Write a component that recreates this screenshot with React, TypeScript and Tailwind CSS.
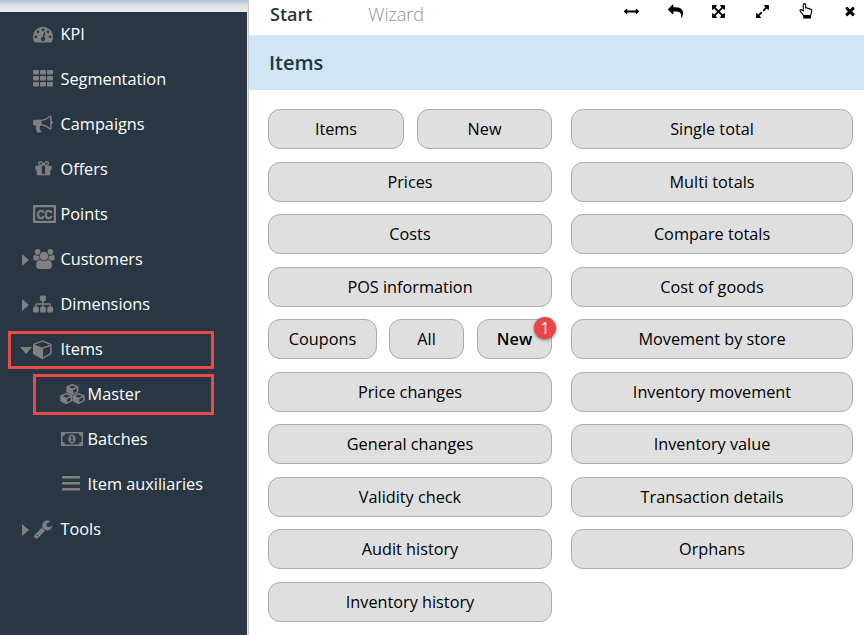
import React from "react";

const P: Record<string, string> = {
  kpi: "M384 1152q0-53-37.5-90.5t-90.5-37.5-90.5 37.5-37.5 90.5 37.5 90.5 90.5 37.5 90.5-37.5 37.5-90.5zm192-448q0-53-37.5-90.5t-90.5-37.5-90.5 37.5-37.5 90.5 37.5 90.5 90.5 37.5 90.5-37.5 37.5-90.5zm428 481l101-382q6-26-7.5-48.5t-38.5-29.5-48 6.5-30 39.5l-101 382q-60 5-107 43.5t-63 98.5q-20 77 20 146t117 89 146-20 89-117q16-60-6-117t-72-91zm660-33q0-53-37.5-90.5t-90.5-37.5-90.5 37.5-37.5 90.5 37.5 90.5 90.5 37.5 90.5-37.5 37.5-90.5zm-640-640q0-53-37.5-90.5t-90.5-37.5-90.5 37.5-37.5 90.5 37.5 90.5 90.5 37.5 90.5-37.5 37.5-90.5zm448 192q0-53-37.5-90.5t-90.5-37.5-90.5 37.5-37.5 90.5 37.5 90.5 90.5 37.5 90.5-37.5 37.5-90.5zm320 448q0 261-141 483-19 29-54 29h-1402q-35 0-54-29-141-221-141-483 0-182 71-348t191-286 286-191 348-71 348 71 286 191 191 286 71 348z",
  bullhorn: "M1664 640q53 0 90.5 37.5t37.5 90.5-37.5 90.5-90.5 37.5v384q0 52-38 90t-90 38q-417-347-812-380-58 19-91 66t-31 100.5 40 92.5q-20 33-23 65.5t6 58 33.5 55 48 50 61.5 50.5q-29 58-111.5 83t-168.5 11.5-132-55.5q-7-23-29.5-87.5t-32-94.5-23-89-15-101 3.5-98.5 22-110.5h-122q-66 0-113-47t-47-113v-192q0-66 47-113t113-47h480q435 0 896-384 52 0 90 38t38 90v384zm-128 604v-954q-394 302-768 343v270q377 42 768 341z",
  gift: "M1056 1356v-716h-320v716q0 25 18 38.5t46 13.5h192q28 0 46-13.5t18-38.5zm-456-844h195l-126-161q-26-31-69-31-40 0-68 28t-28 68 28 68 68 28zm688-96q0-40-28-68t-68-28q-43 0-69 31l-125 161h194q40 0 68-28t28-68zm376 256v320q0 14-9 23t-23 9h-96v416q0 40-28 68t-68 28h-1088q-40 0-68-28t-28-68v-416h-96q-14 0-23-9t-9-23v-320q0-14 9-23t23-9h440q-93 0-158.5-65.5t-65.5-158.5 65.5-158.5 158.5-65.5q107 0 168 77l128 165 128-165q61-77 168-77 93 0 158.5 65.5t65.5 158.5-65.5 158.5-158.5 65.5h440q14 0 23 9t9 23z",
  users: "M593 896q-162 5-265 128h-134q-82 0-138-40.5t-56-118.5q0-353 124-353 6 0 43.5 21t97.5 42.5 119 21.5q67 0 133-23-5 37-5 66 0 139 81 256zm1071 637q0 120-73 189.5t-194 69.5h-874q-121 0-194-69.5t-73-189.5q0-53 3.5-103.5t14-109 26.5-108.5 43-97.5 62-81 85.5-53.5 111.5-20q10 0 43 21.5t73 48 107 48 135 21.5 135-21.5 107-48 73-48 43-21.5q61 0 111.5 20t85.5 53.5 62 81 43 97.5 26.5 108.5 14 109 3.5 103.5zm-1024-1277q0 106-75 181t-181 75-181-75-75-181 75-181 181-75 181 75 75 181zm704 384q0 159-112.5 271.5t-271.5 112.5-271.5-112.5-112.5-271.5 112.5-271.5 271.5-112.5 271.5 112.5 112.5 271.5zm576 225q0 78-56 118.5t-138 40.5h-134q-103-123-265-128 81-117 81-256 0-29-5-66 66 23 133 23 59 0 119-21.5t97.5-42.5 43.5-21q124 0 124 353zm-128-609q0 106-75 181t-181 75-181-75-75-181 75-181 181-75 181 75 75 181z",
  sitemap: "M1792 1248v320q0 40-28 68t-68 28h-320q-40 0-68-28t-28-68v-320q0-40 28-68t68-28h96v-192h-512v192h96q40 0 68 28t28 68v320q0 40-28 68t-68 28h-320q-40 0-68-28t-28-68v-320q0-40 28-68t68-28h96v-192h-512v192h96q40 0 68 28t28 68v320q0 40-28 68t-68 28h-320q-40 0-68-28t-28-68v-320q0-40 28-68t68-28h96v-192q0-52 38-90t90-38h512v-192h-96q-40 0-68-28t-28-68v-320q0-40 28-68t68-28h320q40 0 68 28t28 68v320q0 40-28 68t-68 28h-96v192h512q52 0 90 38t38 90v192h96q40 0 68 28t28 68z",
  cube: "M896 1629l640-349v-636l-640 233v752zm-64-865l698-254-698-254-698 254 698 254zm832-252v768q0 35-18 65t-49 47l-704 384q-28 16-61 16t-61-16l-704-384q-31-17-49-47t-18-65v-768q0-40 23-73t61-47l704-256q22-8 44-8t44 8l704 256q38 14 61 47t23 73z",
  wrench: "M448 1472q0-26-19-45t-45-19-45 19-19 45 19 45 45 19 45-19 19-45zm644-420l-682 682q-37 37-90 37-52 0-91-37l-106-108q-38-36-38-90 0-53 38-91l681-681q39 98 114.5 173.5t173.5 114.5zm634-435q0 39-23 106-47 134-164.5 217.5t-258.5 83.5q-185 0-316.5-131.5t-131.5-316.5 131.5-316.5 316.5-131.5q58 0 121.5 16.5t107.5 46.5q16 11 16 28t-16 28l-293 169v224l193 107q5-3 79-48.5t135.5-81 70.5-35.5q15 0 23.5 10t8.5 25z",
  arrowsH: "M1792 896q0 26-19 45l-256 256q-19 19-45 19t-45-19-19-45v-128h-1024v128q0 26-19 45t-45 19-45-19l-256-256q-19-19-19-45t19-45l256-256q19-19 45-19t45 19 19 45v128h1024v-128q0-26 19-45t45-19 45 19l256 256q19 19 19 45z",
  reply: "M1792 1120q0 166-127 451-3 7-10.5 24t-13.5 30-13 22q-12 17-28 17-15 0-23.5-10t-8.5-25q0-9 2.5-26.5t2.5-23.5q5-68 5-123 0-101-17.5-181t-48.5-138.5-80-101-105.5-69.5-133-42.5-154-21.5-175.5-6h-224v256q0 26-19 45t-45 19-45-19l-512-512q-19-19-19-45t19-45l512-512q19-19 45-19t45 19 19 45v256h224q713 0 875 403 53 134 53 333z",
  arrowsAlt: "M1411 541l-355 355 355 355 144-144q29-31 70-14 39 17 39 59v448q0 26-19 45t-45 19h-448q-42 0-59-40-17-39 14-69l144-144-355-355-355 355 144 144q31 30 14 69-17 40-59 40h-448q-26 0-45-19t-19-45v-448q0-42 40-59 39-17 69 14l144 144 355-355-355-355-144 144q-19 19-45 19-12 0-24-5-40-17-40-59v-448q0-26 19-45t45-19h448q42 0 59 40 17 39-14 69l-144 144 355 355 355-355-144-144q-31-30-14-69 17-40 59-40h448q26 0 45 19t19 45v448q0 42-39 59-13 5-25 5-26 0-45-19z",
  expand: "M883 1056q0 13-10 23l-332 332 144 144q19 19 19 45t-19 45-45 19h-448q-26 0-45-19t-19-45v-448q0-26 19-45t45-19 45 19l144 144 332-332q10-10 23-10t23 10l114 114q10 10 10 23zm781-864v448q0 26-19 45t-45 19-45-19l-144-144-332 332q-10 10-23 10t-23-10l-114-114q-10-10-10-23t10-23l332-332-144-144q-19-19-19-45t19-45 45-19h448q26 0 45 19t19 45z",
  times: "M1490 1322q0 40-28 68l-136 136q-28 28-68 28t-68-28l-294-294-294 294q-28 28-68 28t-68-28l-136-136q-28-28-28-68t28-68l294-294-294-294q-28-28-28-68t28-68l136-136q28-28 68-28t68 28l294 294 294-294q28-28 68-28t68 28l136 136q28 28 28 68t-28 68l-294 294 294 294q28 28 28 68z",
};

function Glyph({ d, w = 1792, className }: { d: string; w?: number; className: string }) {
  return (
    <svg viewBox={`0 0 ${w} 1792`} fill="currentColor" className={className}>
      <path d={d} />
    </svg>
  );
}

const Grid = () => (
  <svg viewBox="0 0 20 17" fill="currentColor" className="h-[17px] w-5">
    {[0, 6, 12].map((y) => [0, 7, 14].map((x) => <rect key={`${x}-${y}`} x={x} y={y} width="6" height="4.5" rx="1" />))}
  </svg>
);

const Captions = () => (
  <svg viewBox="0 0 23 18" className="h-[18px] w-[23px]" fill="currentColor">
    <path fillRule="evenodd" d="M0 0h23v18H0zM2.200 3.200v11.600q0 1 1 1h16.600q1 0 1-1V3.200q0-1-1-1H3.200q-1 0-1 1z" />
    <text x="11.500" y="13.700" textAnchor="middle" fontSize="13" fontWeight="700" stroke="currentColor" strokeWidth=".7" fontFamily="Liberation Sans, sans-serif" textLength="15.500" lengthAdjust="spacingAndGlyphs">CC</text>
  </svg>
);

const Cubes = () => (
  <svg viewBox="0 0 25 20" className="h-5 w-[25px] shrink-0" fill="currentColor">
    {["translate(6.400 -.2)", "translate(.3 8.900)", "translate(12.600 8.900)"].map((t) => (
      <g key={t} transform={t}>
        <path d="M6 .2L11.600 2.600V8L6 10.900.4 8V2.600z" fill="#293744" />
        <path fillRule="evenodd" d="M6 0L11.300 2.200q.7.300.7 1v4.500q0 .7-.6 1L6.500 11q-.5.200-1 0L.6 8.700Q0 8.400 0 7.700V3.200q0-.7.700-1zM6 1.600L2.300 3.200 6 4.800l3.700-1.600zM6.700 6.100v3.300l3.800-1.800V4.400z" />
      </g>
    ))}
  </svg>
);

const Banknote = () => (
  <svg viewBox="0 0 22 14" className="ml-px h-3.5 w-[22px]" fill="currentColor">
    <path fillRule="evenodd" d="M0 0h22v14H0zM4 1.500A2.500 2.500 0 0 1 1.500 4v6A2.500 2.500 0 0 1 4 12.500h14A2.500 2.500 0 0 1 20.500 10V4A2.500 2.500 0 0 1 18 1.500z" />
    <path fillRule="evenodd" d="M11 2.500c2.400 0 3.600 2.200 3.600 4.500s-1.200 4.500-3.600 4.500S7.400 9.300 7.400 7 8.600 2.500 11 2.500zM10.600 4L9 5.300l.6.700.8-.6v3.300H9.200v1h3.700v-1h-1.200V4z" />
  </svg>
);

const Bars = () => (
  <svg viewBox="0 0 18 15" className="ml-0.5 h-[15px] w-[18px]" fill="currentColor">
    <rect width="18" height="2.600" rx=".5" /><rect y="6" width="18" height="2.600" rx=".5" /><rect y="12" width="18" height="2.600" rx=".5" />
  </svg>
);

const Hand = () => (
  <svg viewBox="0 0 14 16" className="mr-px h-4 w-3.5" fill="none" stroke="currentColor" strokeWidth="1.1" strokeLinejoin="round">
    <path d="M4.500 12.500C4 10.500 1 9 1 7.500c0-1.200 1.500-1.300 3.300.5V2c0-1.800 2.400-1.800 2.400 0v3c1-.4 1.800-.2 2.100.5 1-.3 1.700 0 2 .7 1.300-.2 2 .5 2 1.600 0 2-1 3-1.200 4.700z" />
    <path d="M4.800 12.700h6.700v2.300H4.800z" fill="currentColor" />
  </svg>
);

type Nav = { label: string; icon: React.ReactNode; sub?: boolean; caret?: "right" | "down"; boxed?: boolean };
const nav: Nav[] = [
  { label: "KPI", icon: <Glyph d={P.kpi} className="size-5" /> },
  { label: "Segmentation", icon: <Grid /> },
  { label: "Campaigns", icon: <Glyph d={P.bullhorn} className="size-5" /> },
  { label: "Offers", icon: <Glyph d={P.gift} className="ml-px size-[19px]" /> },
  { label: "Points", icon: <Captions /> },
  { label: "Customers", icon: <Glyph d={P.users} w={1920} className="h-5 w-[22px]" />, caret: "right" },
  { label: "Dimensions", icon: <Glyph d={P.sitemap} className="size-5" />, caret: "right" },
  { label: "Items", icon: <Glyph d={P.cube} className="size-5" />, caret: "down", boxed: true },
  { label: "Master", icon: <Cubes />, sub: true, boxed: true },
  { label: "Batches", icon: <Banknote />, sub: true },
  { label: "Item auxiliaries", icon: <Bars />, sub: true },
  { label: "Tools", icon: <Glyph d={P.wrench} className="size-5" />, caret: "right" },
];

function NavRow({ item }: { item: Nav }) {
  const box = item.boxed ? "outline-[3px] -outline-offset-3 outline-[#e94b47]" : "";
  return (
    <div className="flex h-[45px] items-center">
      <div className={`flex items-center ${item.sub ? "ml-[33px] h-[41px] w-[181px] pl-[27px]" : "ml-2 h-[38px] w-[206px] pl-3"} ${box}`}>
        {!item.sub && (
          <span className="flex w-[13px] shrink-0 justify-center text-[#808080]">
            {item.caret === "right" && <svg viewBox="0 0 7 12" className="mr-0.5 h-3 w-[7px]" fill="currentColor"><path d="M0 0l7 6-7 6z" /></svg>}
            {item.caret === "down" && <svg viewBox="0 0 12 7" className="mr-px mt-px h-[7px] w-3" fill="currentColor"><path d="M0 0h12L6 7z" /></svg>}
          </span>
        )}
        <span className="flex w-[27.500px] shrink-0 items-center pb-0.5 text-[#808080]">{item.icon}</span>
        <span className="whitespace-nowrap text-[16.300px] text-white">{item.label}</span>
      </div>
    </div>
  );
}

function Btn({ label, className = "w-full", active }: { label: string; className?: string; active?: boolean }) {
  return (
    <button className={`relative h-10 shrink-0 rounded-xl border border-[#ababab] bg-[#dfdfdf] text-[16.250px] leading-6 text-black ${active ? "font-semibold" : ""} ${className}`}>
      {label}
      {active && (
        <span className="absolute -right-[5px] -top-[3px] flex size-[22px] items-center justify-center rounded-full bg-[#e94549] text-[16px] font-normal text-white shadow-[0_1px_3px_rgba(0,0,0,0.5)]">1</span>
      )}
    </button>
  );
}

const left = ["Price changes", "General changes", "Validity check", "Audit history", "Inventory history"];
const right = ["Single total", "Multi totals", "Compare totals", "Cost of goods", "Movement by store", "Inventory movement", "Inventory value", "Transaction details", "Orphans"];

export default function App() {
  return (
    <div className="flex h-[635px] w-[864px] overflow-hidden bg-white font-['Open_Sans',sans-serif]">
      <aside className="flex w-[249px] shrink-0 flex-col border-r border-[#c8c8c8] bg-[#e9e9e9]">
        <div className="h-3 bg-linear-to-b from-[#b5bfd6] via-[#e1e3e8] via-50% to-[#e9e9e9]" />
        <nav className="w-[247px] flex-1 bg-[#293744]">
          {nav.map((n) => <NavRow key={n.label} item={n} />)}
        </nav>
      </aside>
      <main className="min-w-0 flex-1">
        <header className="flex h-[35px] justify-between pl-[21px] pr-[7px] text-[18px] leading-[29px]">
          <div className="flex gap-[56px]">
            <span className="font-semibold text-[#253540]">Start</span>
            <span className="font-light text-[#8c949b]">Wizard</span>
          </div>
          <div className="flex h-[22px] items-center gap-[29px] text-black">
            <Glyph d={P.arrowsH} className="size-[15px]" />
            <Glyph d={P.reply} className="size-[15px]" />
            <Glyph d={P.arrowsAlt} className="-ml-px size-[15px]" />
            <Glyph d={P.expand} className="size-[15px]" />
            <Hand />
            <Glyph d={P.times} className="size-[14px]" />
          </div>
        </header>
        <h1 className="h-[55px] bg-[#d0e6f6] pl-5 text-[20px] font-semibold leading-[55px] text-[#253540]">Items</h1>
        <div className="flex gap-[19px] pl-[19px] pt-[19px]">
          <section className="flex w-[284px] flex-col gap-[12.500px]">
            <div className="flex justify-between"><Btn label="Items" className="w-[136px]" /><Btn label="New" className="w-[135px]" /></div>
            <Btn label="Prices" />
            <Btn label="Costs" />
            <Btn label="POS information" />
            <div className="flex"><Btn label="Coupons" className="mr-3 w-[109px]" /><Btn label="All" className="mr-[13px] w-[75px]" /><Btn label="New" className="w-[75px]" active /></div>
            {left.map((l) => <Btn key={l} label={l} />)}
          </section>
          <section className="flex w-[282px] flex-col gap-[12.500px]">
            {right.map((l) => <Btn key={l} label={l} />)}
          </section>
        </div>
      </main>
    </div>
  );
}
